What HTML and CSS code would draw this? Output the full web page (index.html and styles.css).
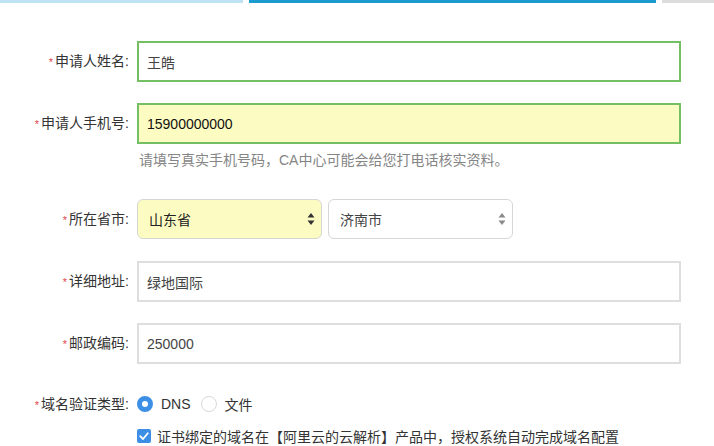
FILE: index.html
```html
<!DOCTYPE HTML>
<html>
<head>
    <meta charset='utf-8'>
    <meta name='viewport' content='width=device-width, initial-scale=1.0'>
    <link rel="stylesheet" href="styles.css">
</head>
<body>
    <!--步骤条-->
    <div class="steps">
        <span class="step done"></span>
        <span class="step active"></span>
        <span class="step"></span>
    </div>

    <form class="certForm">
        <!--姓名-->
        <div class="formRow">
            <label class="formLabel"><i class="req">*</i>申请人姓名:</label>
            <div class="formField">
                <input class="textInput valid" type="text" value="王皓">
            </div>
        </div>

        <!--手机号-->
        <div class="formRow phoneRow">
            <label class="formLabel"><i class="req">*</i>申请人手机号:</label>
            <div class="formField">
                <input class="textInput valid filled" type="text" value="15900000000">
                <div class="helpText">请填写真实手机号码，CA中心可能会给您打电话核实资料。</div>
            </div>
        </div>

        <!--省市-->
        <div class="formRow selectRow">
            <label class="formLabel"><i class="req">*</i>所在省市:</label>
            <div class="formField selectGroup">
                <div class="selectBox filled">
                    <span>山东省</span>
                    <svg class="selectArrow" width="8" height="14" viewBox="0 0 8 14"><path d="M4 1 L7.5 5.5 H0.5 Z M4 13 L7.5 8.5 H0.5 Z" fill="#333"/></svg>
                </div>
                <div class="selectBox">
                    <span>济南市</span>
                    <svg class="selectArrow" width="8" height="14" viewBox="0 0 8 14"><path d="M4 1 L7.5 5.5 H0.5 Z M4 13 L7.5 8.5 H0.5 Z" fill="#8a8a8a"/></svg>
                </div>
            </div>
        </div>

        <!--地址-->
        <div class="formRow">
            <label class="formLabel"><i class="req">*</i>详细地址:</label>
            <div class="formField">
                <input class="textInput" type="text" value="绿地国际">
            </div>
        </div>

        <!--邮编-->
        <div class="formRow postRow">
            <label class="formLabel"><i class="req">*</i>邮政编码:</label>
            <div class="formField">
                <input class="textInput" type="text" value="250000">
            </div>
        </div>

        <!--验证类型-->
        <div class="formRow optionRow">
            <label class="formLabel"><i class="req">*</i>域名验证类型:</label>
            <div class="formField radioGroup">
                <span class="radio checked"></span><span class="optionText">DNS</span>
                <span class="radio"></span><span class="optionText">文件</span>
            </div>
        </div>

        <div class="formRow checkRow">
            <span class="formLabel"></span>
            <div class="formField checkGroup">
                <span class="checkbox">
                    <svg width="14" height="14" viewBox="0 0 14 14"><path d="M3.2 7.2 L6 10 L10.8 4.2" fill="none" stroke="#fff" stroke-width="1.8" stroke-linecap="round" stroke-linejoin="round"/></svg>
                </span>
                <span class="optionText">证书绑定的域名在【阿里云的云解析】产品中，授权系统自动完成域名配置</span>
            </div>
        </div>
    </form>
</body>
</html>
```

FILE: styles.css
```css
body {
    margin: 0;
    padding: 0;
    background-color: #fff;
    font-family: "Liberation Sans", "Noto Sans CJK SC", sans-serif;
    font-size: 14px;
    color: #333;
    height: 446px;
    overflow: hidden;
}

.steps {
    display: flex;
    gap: 6px;
    height: 3px;
}

.step {
    display: block;
    height: 3px;
    background-color: #dcdcdc;
    flex: 0 0 52px;
}

.step.done {
    flex: 0 0 243px;
    background-color: #bfe3f3;
}

.step.active {
    flex: 0 0 407px;
    background-color: #1c9bcf;
}

.certForm {
    display: flex;
    flex-direction: column;
    padding-top: 38px;
}

.formRow {
    display: flex;
    align-items: flex-start;
    gap: 8px;
    margin-bottom: 21px;
}

.formLabel {
    flex: 0 0 129px;
    height: 41px;
    text-align: right;
    line-height: 41px;
    color: #333;
    white-space: nowrap;
}

.req {
    font-style: normal;
    color: #e0484a;
    font-size: 11px;
    line-height: 0;
    margin-right: 2px;
}

.formField {
    flex: 0 0 544px;
}

.textInput {
    box-sizing: border-box;
    display: block;
    width: 544px;
    height: 41px;
    margin: 0;
    padding: 0 8px;
    border: 2px solid #dedede;
    background-color: #fff;
    font-family: "Liberation Sans", "Noto Sans CJK SC", sans-serif;
    font-size: 14px;
    color: #444;
    outline: none;
}

.textInput.valid {
    border-color: #74bf63;
}

.textInput.filled {
    background-color: #fcfcc2;
    color: #111;
}

.helpText {
    margin-top: 6px;
    height: 20px;
    line-height: 20px;
    color: #858585;
    padding-left: 2px;
}

.phoneRow {
    margin-bottom: 29px;
}

.selectRow {
    margin-bottom: 22px;
}

.selectRow .formLabel {
    height: 40px;
    line-height: 40px;
}

.selectGroup {
    display: flex;
    gap: 6px;
}

.selectBox {
    box-sizing: border-box;
    width: 185px;
    height: 40px;
    display: flex;
    align-items: center;
    justify-content: space-between;
    padding: 0 6px 0 11px;
    border: 1px solid #d6d6d6;
    border-radius: 6px;
    background-color: #fff;
    color: #444;
}

.selectBox.filled {
    background-color: #fcfcc2;
    color: #222;
}

.selectArrow {
    display: block;
}

.postRow {
    margin-bottom: 30px;
}

.optionRow {
    margin-bottom: 12px;
    align-items: center;
}

.optionRow .formLabel,
.checkRow .formLabel {
    height: 20px;
    line-height: 20px;
}

.checkRow {
    margin-bottom: 0;
}

.radioGroup,
.checkGroup {
    display: flex;
    align-items: center;
    height: 20px;
}

.radio {
    box-sizing: border-box;
    width: 16px;
    height: 16px;
    border-radius: 50%;
    border: 1px solid #d9d9d9;
    background-color: #fff;
    margin-right: 8px;
}

.radio.checked {
    border: 5px solid #3d8fe6;
    background-color: #fff;
}

.radioGroup .optionText {
    margin-right: 10px;
    color: #333;
}

.checkbox {
    width: 14px;
    height: 14px;
    border-radius: 2px;
    background-color: #3d8fe6;
    margin-right: 6px;
    display: flex;
}

.checkGroup .optionText {
    color: #333;
    white-space: nowrap;
}
```
